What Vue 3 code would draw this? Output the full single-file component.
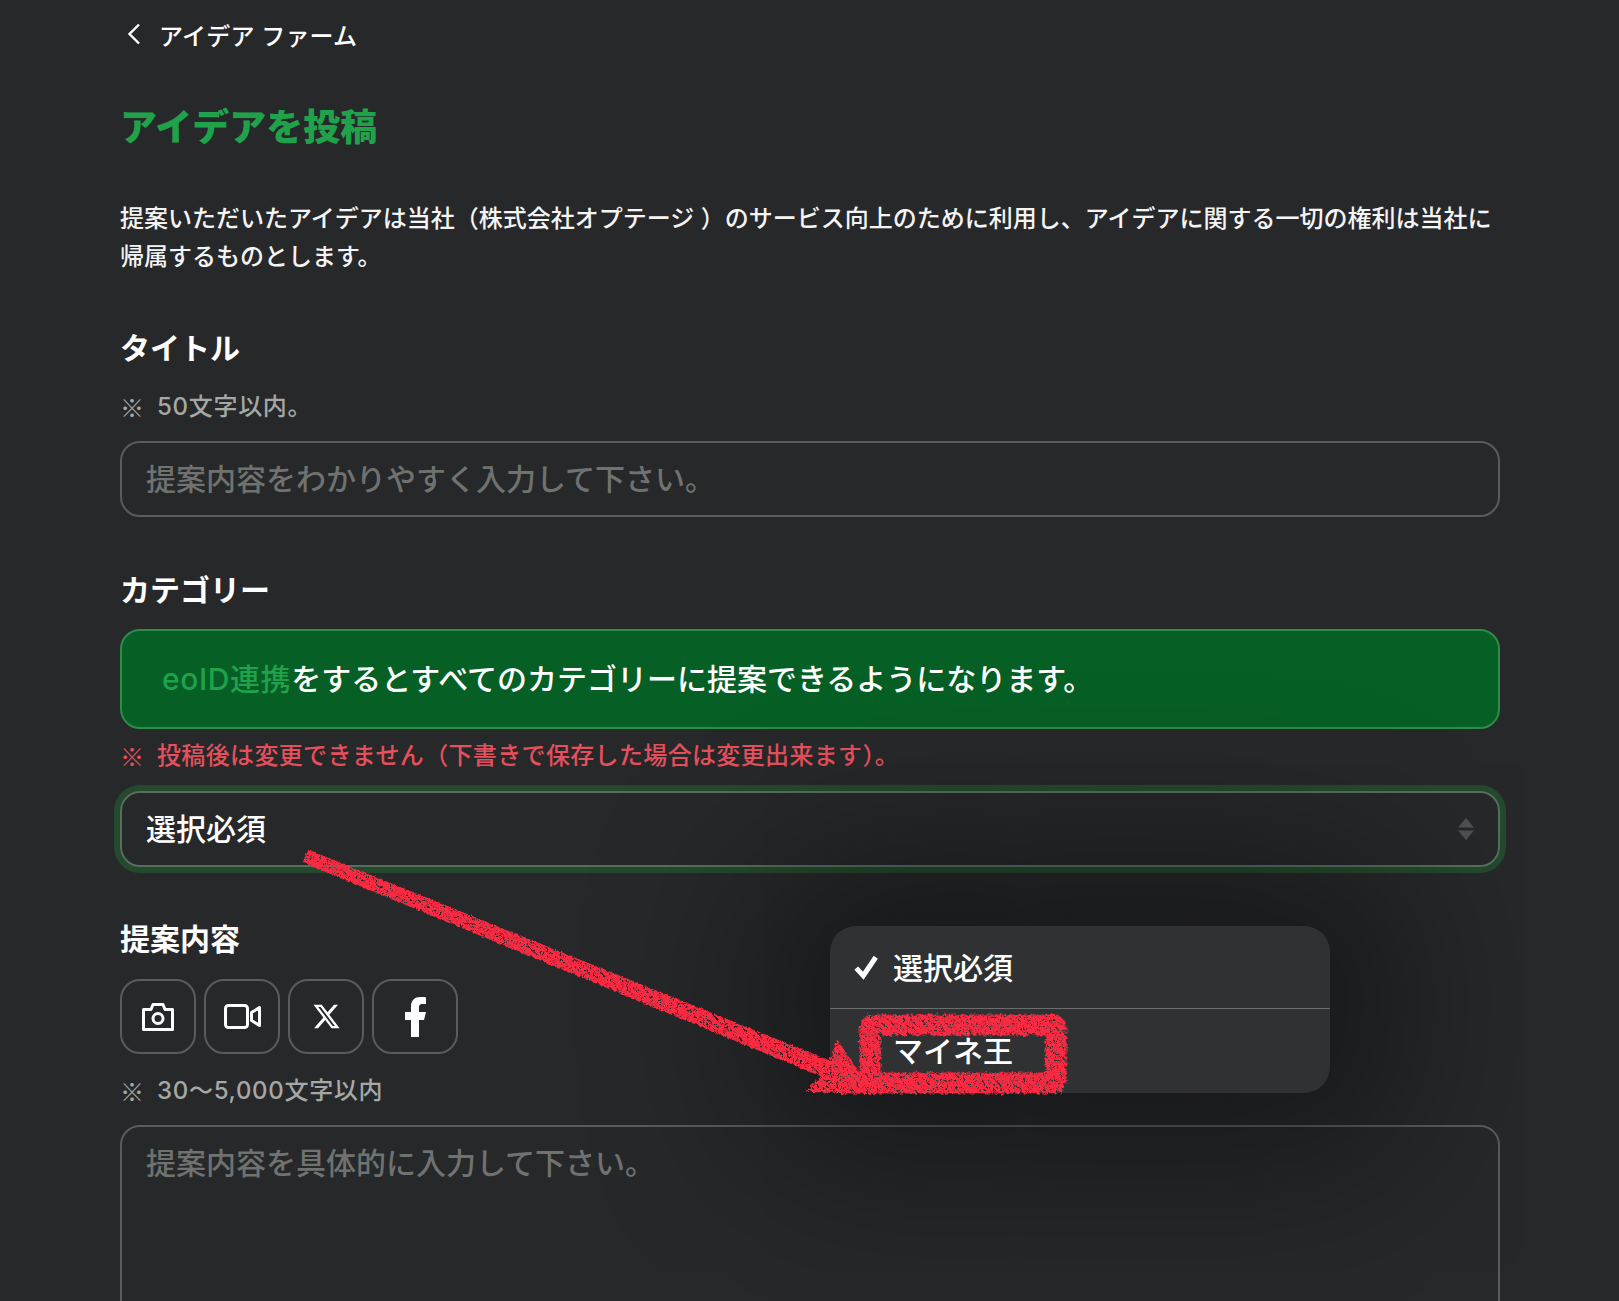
<template>
  <div class="page">
    <main class="content">
      <a class="back">
        <svg class="back-icon" width="14" height="22" viewBox="0 0 14 22" fill="none">
          <path d="M12 1.5 2.5 11l9.5 9.5" stroke="#fff" stroke-width="2.4" />
        </svg>
        <span>アイデア ファーム</span>
      </a>

      <h1 class="page-title">アイデアを投稿</h1>

      <p class="lead">提案いただいたアイデアは当社（株式会社オプテージ ）のサービス向上のために利用し、アイデアに関する一切の権利は当社に帰属するものとします。</p>

      <h2 class="section-title">タイトル</h2>
      <p class="note"><span class="mark">※</span>50文字以内。</p>
      <input class="field" type="text" placeholder="提案内容をわかりやすく入力して下さい。">

      <h2 class="section-title">カテゴリー</h2>
      <div class="banner"><span class="banner-link">eoID連携</span>をするとすべてのカテゴリーに提案できるようになります。</div>
      <p class="note red"><span class="mark">※</span>投稿後は変更できません（下書きで保存した場合は変更出来ます）。</p>
      <div class="select">
        <span>選択必須</span>
        <svg class="select-arrows" width="18" height="22" viewBox="0 0 18 22" fill="#505152">
          <path d="M9 0l8 9.5H1zM9 22l-8-9.5h16z" />
        </svg>
      </div>

      <h2 class="section-title content-title">提案内容</h2>
      <div class="tools">
        <button class="tool">
          <svg width="32" height="28" viewBox="0 0 32 28" fill="none" stroke="#fff" stroke-width="3" stroke-linejoin="round">
            <path d="M1.5 6.5h7.5l2-5h10l2 5h7.5v20h-29z" />
            <circle cx="16" cy="15.5" r="5" />
          </svg>
        </button>
        <button class="tool">
          <svg width="37" height="25" viewBox="0 0 37 25" fill="none" stroke="#fff" stroke-width="3" stroke-linejoin="round">
            <rect x="1.5" y="1.5" width="22" height="22" rx="3" />
            <path d="M35.5 3.5v18l-8-5v-8z" />
          </svg>
        </button>
        <button class="tool">
          <svg width="29" height="29" viewBox="0 0 24 24" fill="#fff">
            <path d="M18.244 2.25h3.308l-7.227 8.26 8.502 11.24H16.17l-5.214-6.817L4.99 21.75H1.68l7.73-8.835L1.254 2.25H8.08l4.713 6.231zm-1.161 17.52h1.833L7.084 4.126H5.117z" />
          </svg>
        </button>
        <button class="tool wide">
          <svg width="48" height="48" viewBox="0 0 24 24" fill="#fff">
            <path d="M14 13.5h2.5l1-4H14v-2c0-1.03 0-2 2-2h1.5V2.14c-.326-.043-1.557-.14-2.857-.14C11.928 2 10 3.657 10 6.7v2.8H7v4h3V22h4z" />
          </svg>
        </button>
      </div>
      <p class="note"><span class="mark">※</span>30〜5,000文字以内</p>
      <textarea class="field area" placeholder="提案内容を具体的に入力して下さい。"></textarea>
    </main>

    <div class="menu">
      <div class="menu-item first">
        <svg class="check" width="26" height="26" viewBox="0 0 24 24" fill="none">
          <path d="M3 13l6.5 7L21 3" stroke="#fff" stroke-width="4.6" />
        </svg>
        選択必須
      </div>
      <div class="menu-item last">マイネ王</div>
    </div>

    <!-- hand drawn markup over the screenshot -->
    <svg class="markup" width="1619" height="1301" viewBox="0 0 1619 1301">
      <defs>
        <filter id="rough" x="-5%" y="-5%" width="110%" height="110%">
          <feTurbulence type="fractalNoise" baseFrequency="0.3" numOctaves="4" seed="7" result="noise" />
          <feColorMatrix in="noise" type="matrix" values="0 0 0 0 0  0 0 0 0 0  0 0 0 0 0  0 0 0 -6 4.15" result="grain" />
          <feComposite in="SourceGraphic" in2="grain" operator="in" result="ink" />
          <feDisplacementMap in="ink" in2="noise" scale="6" />
        </filter>
      </defs>
      <g filter="url(#rough)" fill="#fa2a42" stroke="#fa2a42">
        <path d="M309 851 304 862 847 1086 853 1071z" stroke-width="2" />
        <path d="M810 1090 826 1074 838 1044 870 1092z" stroke-width="4" />
        <rect x="870" y="1025" width="186" height="58" fill="none" stroke-width="21" rx="3" />
      </g>
    </svg>
  </div>
</template>

<script setup>
</script>

<style>
html, body {
  margin: 0;
  background: #27282a;
}
</style>

<style scoped>
.page {
  position: relative;
  height: 1301px;
  overflow: hidden;
  background: #27282a;
  color: #fff;
  font-family: Inter, "Noto Sans CJK JP", sans-serif;
}

.content {
  display: flex;
  flex-direction: column;
  width: 1380px;
  margin-left: 120px;
}

.back {
  display: flex;
  align-items: center;
  height: 68px;
  font-size: 24px;
  font-weight: 500;
  letter-spacing: 0.2px;
}

.back-icon {
  margin: 0 18px 0 7px;
}

.page-title {
  margin: 33px 0 0;
  font-size: 37px;
  line-height: 54px;
  font-weight: 900;
  color: #1fa24a;
}

.lead {
  margin: 45px 0 0;
  font-size: 24px;
  line-height: 37.5px;
  font-weight: 500;
  color: #f4f4f4;
}

.section-title {
  margin: 52px 0 0;
  font-size: 30px;
  line-height: 42px;
  font-weight: 700;
}

.note {
  display: flex;
  margin: 21px 0 0;
  font-size: 24px;
  line-height: 34px;
  font-weight: 500;
  letter-spacing: 0.7px;
  color: #a5a8a6;
}

.mark {
  width: 37px;
  font-family: "Noto Sans CJK JP", sans-serif;
  font-weight: 400;
  letter-spacing: 0;
}

.note.red {
  margin-top: 10px;
  letter-spacing: 0.35px;
  color: #e5505c;
}

.field {
  box-sizing: border-box;
  width: 100%;
  height: 76px;
  margin-top: 17px;
  padding: 0 24px;
  background: transparent;
  border: 2px solid #595c5a;
  border-radius: 20px;
  font-family: inherit;
  font-size: 30px;
  font-weight: 500;
  color: #fff;
  outline: none;
}

.field::placeholder {
  color: #707270;
}

.area {
  display: block;
  height: 260px;
  margin-top: 17px;
  padding-top: 15px;
  line-height: 42px;
  resize: none;
}

.banner {
  box-sizing: border-box;
  display: flex;
  align-items: center;
  height: 100px;
  margin-top: 18px;
  padding: 0 0 4px 40px;
  background: #065f25;
  border: 2px solid #2f8a4b;
  border-radius: 20px;
  font-size: 30px;
  font-weight: 500;
}

.banner-link {
  letter-spacing: 0.6px;
  color: #1fa24a;
}

.select {
  box-sizing: border-box;
  display: flex;
  align-items: center;
  justify-content: space-between;
  height: 76px;
  margin-top: 18px;
  padding: 0 23px 4px 24px;
  border: 2px solid #54705c;
  border-radius: 20px;
  box-shadow: 0 0 0 6px #25492f;
  font-size: 30px;
  font-weight: 500;
}

.select-arrows {
  margin-top: 4px;
}

.content-title {
  margin-top: 51px;
}

.tools {
  display: flex;
  gap: 8px;
  margin-top: 19px;
}

.tool {
  box-sizing: border-box;
  display: flex;
  align-items: center;
  justify-content: center;
  width: 76px;
  height: 75px;
  padding: 0;
  background: transparent;
  border: 2px solid #595c5a;
  border-radius: 20px;
}

.tool.wide {
  width: 86px;
}

.tools + .note {
  margin-top: 20px;
}

.menu {
  position: absolute;
  left: 830px;
  top: 926px;
  width: 500px;
  height: 167px;
  background: #303132;
  border-radius: 26px;
  box-shadow: 0 0 170px 70px rgba(0, 0, 0, 0.42);
  font-size: 30px;
  font-weight: 500;
}

.menu-item {
  position: relative;
  display: flex;
  align-items: center;
  box-sizing: border-box;
  height: 83px;
  padding-left: 63px;
}

.menu-item.first {
  padding-bottom: 2px;
  border-bottom: 1px solid #6c6d6e;
}

.menu-item.last {
  padding-bottom: 4px;
}

.check {
  position: absolute;
  left: 23px;
  top: 28px;
}

.markup {
  position: absolute;
  left: 0;
  top: 0;
  pointer-events: none;
}
</style>
